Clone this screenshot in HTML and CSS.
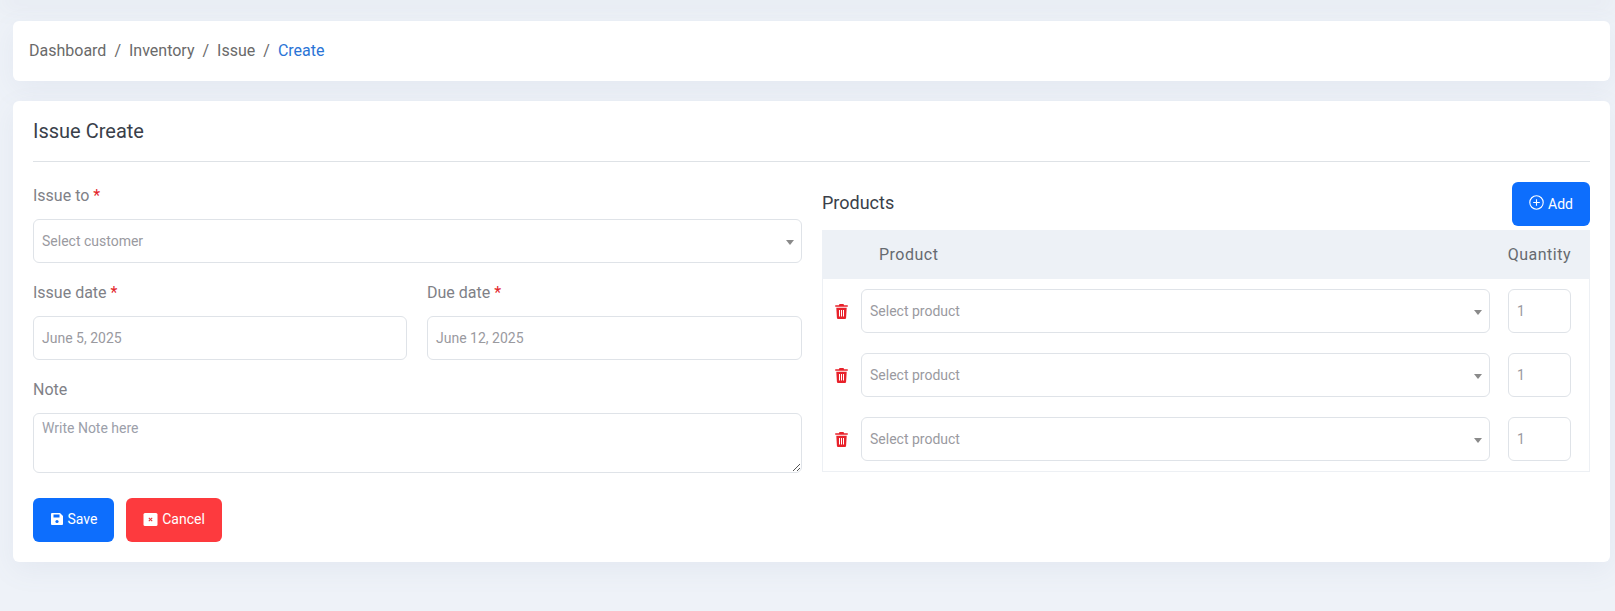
FILE: index.html
```html
<!DOCTYPE html>
<html lang="en">
<head>
<meta charset="utf-8">
<title>Issue Create</title>
<link rel="stylesheet" href="styles.css">
</head>
<body>
<div class="topshade"></div>
<main class="page">
  <nav class="crumbs card">
    <span>Dashboard</span><i>/</i><span>Inventory</span><i>/</i><span>Issue</span><i>/</i><span class="active">Create</span>
  </nav>
  <section class="card panel">
    <h1 class="title">Issue Create</h1>
    <div class="columns">
      <form class="left">
        <label class="label">Issue to <b>*</b></label>
        <div class="control select">Select customer<span class="caret"></span></div>
        <div class="two">
          <div>
            <label class="label">Issue date <b>*</b></label>
            <div class="control">June 5, 2025</div>
          </div>
          <div>
            <label class="label">Due date <b>*</b></label>
            <div class="control">June 12, 2025</div>
          </div>
        </div>
        <label class="label">Note</label>
        <div class="control area">Write Note here
          <svg class="grip" width="9" height="9" viewBox="0 0 9 9"><path d="M1 8 8 1M5 8 8 5" stroke="#555" stroke-width="1" fill="none"/></svg>
        </div>
        <div class="actions">
          <button type="button" class="btn blue">
            <svg width="14" height="14" viewBox="0 0 14 14"><path fill="#fff" d="M2 1h8l3 3v8a1 1 0 0 1-1 1H2a1 1 0 0 1-1-1V2a1 1 0 0 1 1-1z"/><rect x="3.5" y="2.500" width="6" height="3" fill="#0d6efd"/><circle cx="7" cy="9.500" r="1.600" fill="#0d6efd"/></svg>Save
          </button>
          <button type="button" class="btn red">
            <svg width="15" height="13" viewBox="0 0 15 13"><rect x=".5" width="14" height="13" rx="1.500" fill="#fff"/><path d="M5.800 4.800 9.200 8.200M9.200 4.800 5.800 8.200" stroke="#e5343a" stroke-width="1.100"/></svg>Cancel
          </button>
        </div>
      </form>
      <div class="right">
        <div class="prodhead">
          <h2 class="subtitle">Products</h2>
          <button type="button" class="btn blue add">
            <svg width="15" height="15" viewBox="0 0 15 15" fill="none" stroke="#fff" stroke-width="1.100"><circle cx="7.500" cy="7.500" r="6.700"/><path d="M7.500 4.200v6.600M4.200 7.500h6.600"/></svg>Add
          </button>
        </div>
        <div class="table">
          <div class="thead"><span>Product</span><span>Quantity</span></div>
          <div class="row">
            <svg class="trash" width="13" height="15" viewBox="0 0 13 15"><path fill="#e8212a" d="M4.500 0h4l.6 1.200h3.100a.8.8 0 0 1 0 1.600H.8a.8.8 0 0 1 0-1.600h3.100zM1.300 3.800h10.400l-.6 10a1.200 1.200 0 0 1-1.200 1.200H3.100a1.200 1.200 0 0 1-1.200-1.200z"/><path stroke="#fff" stroke-width="1" d="M4.500 6v6.500M6.500 6v6.500M8.500 6v6.500"/></svg>
            <div class="control select">Select product<span class="caret"></span></div>
            <div class="control qty">1</div>
          </div>
          <div class="row">
            <svg class="trash" width="13" height="15" viewBox="0 0 13 15"><path fill="#e8212a" d="M4.500 0h4l.6 1.200h3.100a.8.8 0 0 1 0 1.600H.8a.8.8 0 0 1 0-1.600h3.100zM1.300 3.800h10.400l-.6 10a1.200 1.200 0 0 1-1.200 1.200H3.100a1.200 1.200 0 0 1-1.200-1.200z"/><path stroke="#fff" stroke-width="1" d="M4.500 6v6.500M6.500 6v6.500M8.500 6v6.500"/></svg>
            <div class="control select">Select product<span class="caret"></span></div>
            <div class="control qty">1</div>
          </div>
          <div class="row">
            <svg class="trash" width="13" height="15" viewBox="0 0 13 15"><path fill="#e8212a" d="M4.500 0h4l.6 1.200h3.100a.8.8 0 0 1 0 1.600H.8a.8.8 0 0 1 0-1.600h3.100zM1.300 3.800h10.400l-.6 10a1.200 1.200 0 0 1-1.200 1.200H3.100a1.200 1.200 0 0 1-1.200-1.200z"/><path stroke="#fff" stroke-width="1" d="M4.500 6v6.500M6.500 6v6.500M8.500 6v6.500"/></svg>
            <div class="control select">Select product<span class="caret"></span></div>
            <div class="control qty">1</div>
          </div>
        </div>
      </div>
    </div>
  </section>
</main>
</body>
</html>
```
FILE: styles.css
```css
* { box-sizing: border-box; }
html, body { margin: 0; height: 100%; overflow: hidden; }
body {
  background: #eef2f8;
  font-family: Roboto, "Liberation Sans", sans-serif;
  position: relative;
}
.topshade {
  position: absolute;
  top: -2px; left: 0; right: 0;
  height: 2px;
  box-shadow: 0 2px 22px rgba(110, 120, 140, .45);
}
.page {
  position: relative;
  padding: 21px 5px 0 13px;
}
.card {
  background: #fff;
  border-radius: 6px;
  box-shadow: 0 8px 28px rgba(120, 130, 160, .08);
}
.crumbs {
  height: 60px;
  padding: 0 16px 2px;
  display: flex;
  align-items: center;
  font-size: 16px;
  color: #6a6a6a;
}
.crumbs i { font-style: normal; margin: 0 8px; }
.crumbs .active { color: #2a74d6; }
.panel {
  margin-top: 20px;
  height: 461px;
  padding: 18px 20px 0;
}
.title {
  margin: 0;
  height: 43px;
  border-bottom: 1px solid #dee2e6;
  font-size: 20px;
  font-weight: 400;
  line-height: 25px;
  color: #3a3f4a;
}
.columns {
  display: flex;
  gap: 20px;
  padding-top: 20px;
}
.left { width: 769px; }
.right { flex: 1; }
.label {
  display: block;
  height: 23px;
  margin: 0 0 12px;
  font-size: 16px;
  line-height: 23px;
  color: #808187;
}
.label b { color: #e3242b; font-weight: 400; }
.control {
  position: relative;
  height: 44px;
  padding: 0 8px;
  border: 1px solid #dfe3e8;
  border-radius: 6px;
  background: #fff;
  display: flex;
  align-items: center;
  font-size: 14px;
  color: #9a9a9f;
}
.caret {
  position: absolute;
  right: 7px;
  top: 20px;
  border: 4px solid transparent;
  border-top: 5px solid #8a8a8a;
  border-bottom: 0;
}
.left > .control.select { margin-bottom: 18px; }
.left > .label:first-child { margin-top: 2px; }
.two {
  display: grid;
  grid-template-columns: 374px 375px;
  gap: 20px;
  margin-bottom: 18px;
}
.area {
  height: 60px;
  align-items: flex-start;
  padding-top: 6px;
  color: #9ca0aa;
}
.grip { position: absolute; right: 0; bottom: 0; }
.actions {
  display: flex;
  gap: 12px;
  margin-top: 25px;
}
.actions .btn { padding-bottom: 2px; }
.btn {
  height: 44px;
  border: 0;
  border-radius: 6px;
  color: #fff;
  font: 400 14px Roboto, "Liberation Sans", sans-serif;
  display: inline-flex;
  align-items: center;
  justify-content: center;
  gap: 4px;
  padding: 0;
}
.blue { background: #0d6efd; width: 81px; }
.red { background: #fd3a3e; width: 96px; }
.add { width: 78px; gap: 4px; }
.add svg { margin-top: -3px; }
.prodhead {
  display: flex;
  justify-content: space-between;
  align-items: center;
  height: 44px;
  margin-bottom: 4px;
}
.subtitle {
  margin: 0 0 4px;
  font-size: 18px;
  font-weight: 400;
  color: #3a3f4a;
}
.table {
  border: 1px solid #edf0f4;
  border-top: 0;
  height: 242px;
}
.thead {
  height: 49px;
  margin: 0 -1px;
  background: #edf1f6;
  display: flex;
  justify-content: space-between;
  align-items: center;
  padding: 0 19px 0 57px;
  font-size: 16px;
  letter-spacing: .5px;
  color: #666a70;
}
.row {
  display: flex;
  align-items: center;
  height: 44px;
  margin-top: 20px;
  padding-left: 12px;
}
.thead + .row { margin-top: 10px; }
.trash { flex: none; }
.row .select { flex: none; width: 629px; margin-left: 13px; }
.qty { flex: none; width: 63px; margin-left: 18px; }
```
